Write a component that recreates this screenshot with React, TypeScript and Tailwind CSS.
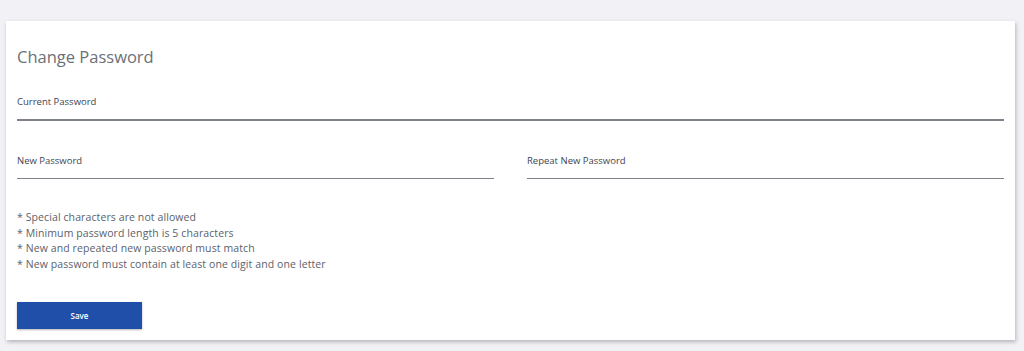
import React from "react";

function Field({ label }: { label: string }) {
  return (
    <div className="flex flex-col">
      <div className="h-[14px] text-[9.5px] leading-[14px] text-[#3d4550]">{label}</div>
      <div className="mt-[10px] h-[1.5px] bg-[#7d8389]" />
    </div>
  );
}

export default function App() {
  return (
    <div
      className="w-[1024px] h-[351px] bg-[#f2f1f6] pt-[21px] pl-[6px] pr-[9px]"
      style={{ fontFamily: '"Open Sans", "Liberation Sans", sans-serif' }}
    >
      <div className="h-[319px] bg-white shadow-[1px_2px_4px_rgba(0,0,0,0.25)] px-[11px] pt-[24px]">
        <h1 className="h-[24px] text-[16.5px] leading-[24px] text-[#6b7079]">
          Change Password
        </h1>
        <div className="mt-[26px]">
          <Field label="Current Password" />
        </div>
        <div className="mt-[33px] grid grid-cols-2 gap-x-[33px]">
          <Field label="New Password" />
          <Field label="Repeat New Password" />
        </div>
        <ul className="mt-[31px] text-[10.5px] leading-[15.6px] text-[#5b626b] tracking-[0.1px]">
          <li>* Special characters are not allowed</li>
          <li>* Minimum password length is 5 characters</li>
          <li>* New and repeated new password must match</li>
          <li>* New password must contain at least one digit and one letter</li>
        </ul>
        <button className="mt-[30px] w-[125px] h-[27px] bg-[#1f4fa8] text-white text-[8px] font-semibold shadow-[0_1px_2px_rgba(0,0,0,0.3)] flex items-center justify-center">
          Save
        </button>
      </div>
    </div>
  );
}
